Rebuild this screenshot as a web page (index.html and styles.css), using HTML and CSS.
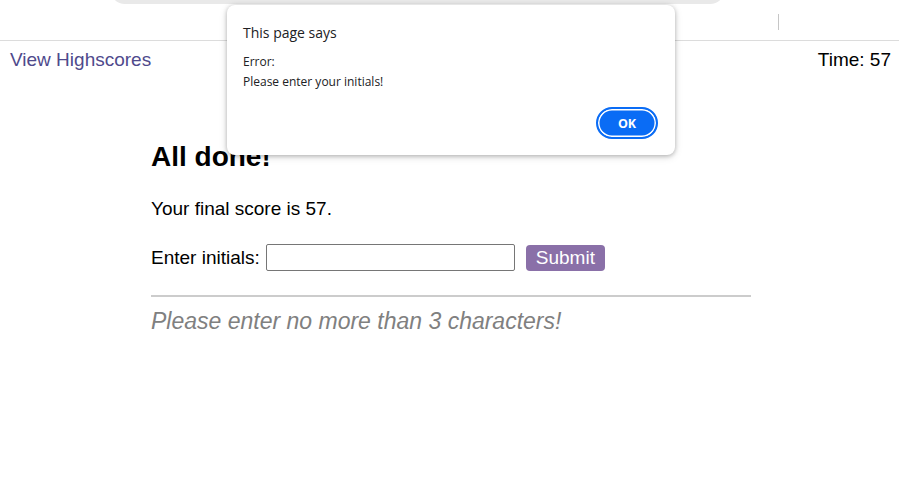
FILE: index.html
```html
<!DOCTYPE html>
<html lang="en">
<head>
<meta charset="utf-8">
<title>Code Quiz</title>
<link rel="stylesheet" href="styles.css">
</head>
<body>
<div class="chrome">
  <div class="omnibox"></div>
  <div class="divider"></div>
</div>
<header class="topbar">
  <a class="highscores" href="#">View Highscores</a>
  <span class="timer">Time: 57</span>
</header>
<main class="quiz">
  <h2 class="title">All done!</h2>
  <p class="score">Your final score is 57.</p>
  <form class="initials-form">
    <label class="label" for="initials">Enter initials:</label>
    <input class="initials" id="initials" type="text">
    <button class="submit" type="button">Submit</button>
  </form>
  <div class="feedback">
    <p class="message">Please enter no more than 3 characters!</p>
  </div>
</main>
<div class="dialog">
  <div class="dialog-title">This page says</div>
  <div class="dialog-body">Error:<br>Please enter your initials!</div>
  <div class="dialog-actions">
    <button class="ok" type="button">OK</button>
  </div>
</div>
</body>
</html>
```
FILE: styles.css
```css
html, body {
  margin: 0;
  padding: 0;
  background: #fff;
}
body {
  font-family: "Liberation Sans", Arial, sans-serif;
  font-size: 19px;
  color: #000;
}
.chrome {
  height: 40px;
  border-bottom: 1px solid #dcdcdc;
  display: flex;
  align-items: flex-start;
}
.omnibox {
  margin-left: 110px;
  margin-top: -26px;
  width: 615px;
  height: 30px;
  background: #e9e9e9;
  border-radius: 16px;
}
.divider {
  margin-left: 53px;
  margin-top: 14px;
  width: 1px;
  height: 16px;
  background: #c6c6c6;
}
.topbar {
  display: flex;
  justify-content: space-between;
  padding: 8px 8px 0 10px;
  line-height: 22px;
}
.highscores {
  color: #4f4a8c;
  text-decoration: none;
}
.timer {
  color: #000;
}
.quiz {
  margin-left: 151px;
  width: 600px;
}
.title {
  font-size: 28px;
  font-weight: bold;
  margin: 70px 0 0;
  line-height: 32px;
}
.score {
  margin: 25px 0 0;
  line-height: 22px;
}
.initials-form {
  display: flex;
  align-items: center;
  margin-top: 24px;
}
.label {
  line-height: 22px;
}
.initials {
  margin-left: 6px;
  width: 249px;
  height: 27px;
  box-sizing: border-box;
  border: 1px solid #767676;
  border-radius: 2px;
  padding: 0 4px;
}
.submit {
  margin-left: 11px;
  height: 26px;
  padding: 0 10px;
  border: none;
  border-radius: 4px;
  background: #8a70a8;
  color: #fff;
  font-family: "Liberation Sans", Arial, sans-serif;
  font-size: 19px;
  line-height: 26px;
}
.feedback {
  margin-top: 24px;
  border-top: 2px solid #cccccc;
}
.message {
  margin: 10px 0 0;
  font-style: italic;
  font-size: 23px;
  line-height: 28px;
  color: #808080;
}
.dialog {
  position: absolute;
  top: 5px;
  left: 227px;
  width: 448px;
  height: 150px;
  box-sizing: border-box;
  padding: 18px 16px 16px 16px;
  background: #fff;
  border-radius: 8px;
  box-shadow: 0 1px 4px rgba(0, 0, 0, 0.25), 0 2px 8px rgba(0, 0, 0, 0.12);
  font-family: "Open Sans", "Noto Sans", sans-serif;
  color: #202124;
  display: flex;
  flex-direction: column;
}
.dialog-title {
  font-size: 14px;
  line-height: 20px;
}
.dialog-body {
  margin-top: 9px;
  font-size: 12px;
  line-height: 20px;
}
.dialog-actions {
  margin-top: auto;
  display: flex;
  justify-content: flex-end;
  padding-right: 1px;
}
.ok {
  width: 62px;
  height: 32px;
  border: 2px solid #0a6cf5;
  border-radius: 16px;
  background: #0a6cf5;
  box-shadow: inset 0 0 0 1.5px #fff;
  color: #fff;
  font-family: "Open Sans", "Noto Sans", sans-serif;
  font-weight: bold;
  font-size: 12.5px;
  padding: 0;
}
```
